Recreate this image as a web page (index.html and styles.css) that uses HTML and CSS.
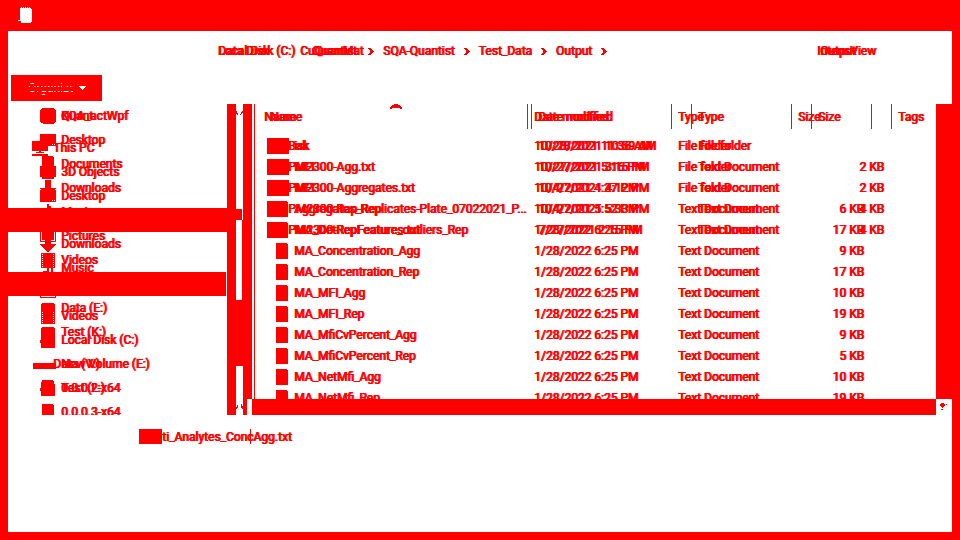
FILE: index.html
```html
<!DOCTYPE html>
<html lang="en">
<head>
<meta charset="utf-8">
<title>Output</title>
<link rel="stylesheet" href="styles.css">
</head>
<body>
<svg class="defs" aria-hidden="true">
  <symbol id="star" viewBox="0 0 16 16"><path d="M2 0h12v1h1v1h1v12h-1v1h-1v1H3v-1H1v-1H0V2h1V1h1z"/></symbol>
  <symbol id="desk" viewBox="0 0 16 16"><path fill-rule="evenodd" d="M0 2h16v12H0zM12 12h1v1h-1zM14 12h1v1h-1z"/></symbol>
  <symbol id="pc" viewBox="0 0 16 16"><path d="M0 1h16v10H0zM7 11h2v1H7zM4 12h8v1H4zM0 14h16v2H0z"/></symbol>
  <symbol id="doc" viewBox="0 0 16 16"><path d="M2 0h11v1h1v15H2z"/></symbol>
  <symbol id="cube" viewBox="0 0 16 16"><path d="M2 1h12v1h2v11h-2v2H2v-2H0V2h2z"/></symbol>
  <symbol id="down" viewBox="0 0 16 16"><path d="M5 0h6v8h5v1h-1v1h-1v1h-1v1h-1v1h-1v1h-1v1H9v1H7v-1H6v-1H5v-1H4v-1H3v-1H2v-1H1V9H0V8h5z"/></symbol>
  <symbol id="music" viewBox="0 0 16 16"><path d="M7 0h2v2h2v2h2v9h-2V5H9v10H3v-4h4z"/></symbol>
  <symbol id="pic" viewBox="0 0 16 16"><path fill-rule="evenodd" d="M0 0h16v14H0zM1 1v12h14V1z"/><path d="M2 2h12v10H2z"/></symbol>
  <symbol id="film" viewBox="0 0 16 16"><path fill-rule="evenodd" d="M1 1h14v15H1zM2 2v1h1V2zM2 4v1h1V4zM2 6v1h1V6zM2 8v1h1V8zM2 10v1h1v-1zM2 12v1h1v-1zM2 14v1h1v-1zM13 2v1h1V2zM13 4v1h1V4zM13 6v1h1V6zM13 8v1h1V8zM13 10v1h1v-1zM13 12v1h1v-1zM13 14v1h1v-1z"/></symbol>
  <symbol id="drive" viewBox="0 0 16 16"><path d="M2 3h12v1h1v8H1V4h1z"/></symbol>
  <symbol id="disk" viewBox="0 0 16 16"><path d="M1 2h13v2h1v12H1v-5H0V8h1z"/></symbol>
  <symbol id="wedge" viewBox="0 0 22 16"><path d="M2 7h20v8H1V8h1z"/></symbol>
  <symbol id="folder" viewBox="0 0 16 16"><path d="M0 0h16v16H0z"/></symbol>
  <symbol id="txt" viewBox="0 0 16 16"><path d="M3 0h11v1h1v15H3z"/></symbol>
  <symbol id="chev" viewBox="0 0 6 7"><path d="M0 0h3v1h1v1h1v1h1v1H5v1H4v1H3v1H0V6h1V5h1V2H1V1H0z"/></symbol>
</svg>

<div class="window">
  <header class="titlebar">
    <svg class="app-icon" viewBox="0 0 16 17" aria-hidden="true"><path d="M4 0h1v1h1V0h1v1h1V0h1v1h1V0h1v1h1V0h1v1h1v1h1v13h-1v1H4v-2H1v-1h2V1h1z"/></svg>
  </header>

  <nav class="address">
    <div class="layer crumbs crumbs-front">
      <a href="#" class="root-crumb">Local Disk (C:)</a>
      <a href="#" class="custom">CuQuanMat</a>
      <svg class="chev"><use href="#chev"/></svg>
      <a href="#">SQA-Quantist</a>
      <svg class="chev"><use href="#chev"/></svg>
      <a href="#">Test_Data</a>
      <svg class="chev"><use href="#chev"/></svg>
      <a href="#">Output</a>
      <svg class="chev"><use href="#chev"/></svg>
    </div>
    <div class="layer crumbs crumbs-back">
      <a href="#" class="root-crumb">Data Disk</a>
      <a href="#" class="quant">Quantist</a>
    </div>
    <div class="layer view view-front">Output</div>
    <div class="layer view">IntensView</div>
  </nav>

  <div class="toolbar">
    <button class="organize" type="button"><span>Organize</span><svg viewBox="0 0 7 4" aria-hidden="true"><path d="M0 0h7v1H6v1H5v1H4v1H3V3H2V2H1V1H0z"/></svg></button>
  </div>

  <main class="panes">
    <aside class="sidebar">
      <ul class="layer tree">
        <li><svg><use href="#star"/></svg>KQA_actWpf</li>
        <li><svg><use href="#desk"/></svg>Desktop</li>
        <li><svg><use href="#doc"/></svg>Documents</li>
        <li><svg><use href="#down"/></svg>Downloads</li>
        <li><svg><use href="#music"/></svg>Music</li>
        <li><svg><use href="#pic"/></svg>Pictures</li>
        <li><svg><use href="#film"/></svg>Videos</li>
        <li class="selected"><i class="dash"></i></li>
        <li><svg><use href="#drive"/></svg>Data (E:)</li>
        <li><svg><use href="#drive"/></svg>Test (K:)</li>
        <li class="root spaced"><svg><use href="#wedge"/></svg>Data (V:)</li>
        <li><svg><use href="#doc"/></svg>0.0.0.2-x64</li>
        <li><svg><use href="#doc"/></svg>0.0.0.3-x64</li>
      </ul>
      <ul class="layer tree">
        <li><svg><use href="#star"/></svg>Quant</li>
        <li class="root spaced"><svg><use href="#pc"/></svg>This PC</li>
        <li><svg><use href="#cube"/></svg>3D Objects</li>
        <li><svg><use href="#desk"/></svg>Desktop</li>
        <li class="selected full"></li>
        <li><svg><use href="#down"/></svg>Downloads</li>
        <li><svg><use href="#music"/></svg>Music</li>
        <li><svg><use href="#pic"/></svg>Pictures</li>
        <li><svg><use href="#film"/></svg>Videos</li>
        <li><svg><use href="#disk"/></svg>Local Disk (C:)</li>
        <li><svg><use href="#wedge"/></svg>New Volume (E:)</li>
        <li><svg><use href="#disk"/></svg>Test (L:)</li>
      </ul>
    </aside>

    <div class="splitter">
      <div class="bar"></div>
      <div class="channel">
        <div class="track-top"><svg class="tick" viewBox="0 0 7 5"><path d="M0 0h1v2h1v2H1V3H0zM6 0h1v2H6v1H5v1H4V3h1V1h1z"/></svg></div>
        <div class="thumb-edge"></div>
        <div class="track-mid"></div>
        <div class="thumb"></div>
        <div class="track-end"><svg class="tick" viewBox="0 0 7 5"><path d="M0 3h1V1h1v3H1v1H0zM5 0h1v2h1v3H6V4H5z"/></svg></div>
      </div>
      <div class="bar notched"></div>
    </div>

    <section class="files">
      <div class="list">
        <svg class="sort" viewBox="0 0 12 5" aria-hidden="true"><path d="M4 0h4v1h2v1h1v1h1v2h-2V4H2v1H0V3h1V2h1V1h2z"/></svg>
        <table class="layer table-a">
          <colgroup><col class="name"><col class="date"><col class="type"><col class="size"><col></colgroup>
          <thead><tr><th>Name</th><th>Date modified</th><th>Type</th><th>Size</th><th></th></tr></thead>
          <tbody>
            <tr><td><svg><use href="#folder"/></svg>isk</td><td>10/28/2021 11:36 AM</td><td>File folder</td><td></td><td></td></tr>
            <tr><td><svg><use href="#folder"/></svg>MFI</td><td>10/27/2021 5:16 PM</td><td>File folder</td><td></td><td></td></tr>
            <tr><td><svg><use href="#folder"/></svg>MFI</td><td>10/4/2021 4:27 PM</td><td>File folder</td><td></td><td></td></tr>
            <tr><td><svg><use href="#txt"/></svg>Aggregates_Rep</td><td>10/4/2021 5:52 PM</td><td>Text Document</td><td>6 KB</td><td></td></tr>
            <tr><td><svg><use href="#txt"/></svg>MA_DetRepFeature_outliers_Rep</td><td>1/28/2022 6:25 PM</td><td>Text Document</td><td>17 KB</td><td></td></tr>
            <tr><td><svg><use href="#txt"/></svg>MA_Concentration_Agg</td><td>1/28/2022 6:25 PM</td><td>Text Document</td><td>9 KB</td><td></td></tr>
            <tr><td><svg><use href="#txt"/></svg>MA_Concentration_Rep</td><td>1/28/2022 6:25 PM</td><td>Text Document</td><td>17 KB</td><td></td></tr>
            <tr><td><svg><use href="#txt"/></svg>MA_MFI_Agg</td><td>1/28/2022 6:25 PM</td><td>Text Document</td><td>10 KB</td><td></td></tr>
            <tr><td><svg><use href="#txt"/></svg>MA_MFI_Rep</td><td>1/28/2022 6:25 PM</td><td>Text Document</td><td>19 KB</td><td></td></tr>
            <tr><td><svg><use href="#txt"/></svg>MA_MfiCvPercent_Agg</td><td>1/28/2022 6:25 PM</td><td>Text Document</td><td>9 KB</td><td></td></tr>
            <tr><td><svg><use href="#txt"/></svg>MA_MfiCvPercent_Rep</td><td>1/28/2022 6:25 PM</td><td>Text Document</td><td>5 KB</td><td></td></tr>
            <tr><td><svg><use href="#txt"/></svg>MA_NetMfi_Agg</td><td>1/28/2022 6:25 PM</td><td>Text Document</td><td>10 KB</td><td></td></tr>
            <tr><td><svg><use href="#txt"/></svg>MA_NetMfi_Rep</td><td>1/28/2022 6:25 PM</td><td>Text Document</td><td>19 KB</td><td></td></tr>
          </tbody>
        </table>
        <table class="layer table-b">
          <colgroup><col class="name"><col class="date"><col class="type"><col class="size"><col></colgroup>
          <thead><tr><th>Name</th><th>Date modified</th><th>Type</th><th>Size</th><th>Tags</th></tr></thead>
          <tbody>
            <tr><td><svg><use href="#folder"/></svg>Bak</td><td>10/28/2021 10:59 AM</td><td>File folder</td><td></td><td></td></tr>
            <tr><td><svg><use href="#folder"/></svg>PM2300-Agg.txt</td><td>10/27/2021 3:15 PM</td><td>Text Document</td><td>2 KB</td><td></td></tr>
            <tr><td><svg><use href="#folder"/></svg>PM2300-Aggregates.txt</td><td>10/27/2021 4:12 PM</td><td>Text Document</td><td>2 KB</td><td></td></tr>
            <tr><td><svg><use href="#folder"/></svg>PM2300-Rap-Replicates-Plate_07022021_P...</td><td>10/27/2021 5:33 PM</td><td>Text Document</td><td>4 KB</td><td></td></tr>
            <tr><td><svg><use href="#folder"/></svg>PM2300-RepFeatures.txt</td><td>7/27/2021 2:15 PM</td><td>Text Document</td><td>4 KB</td><td></td></tr>
          </tbody>
        </table>
      </div>
      <div class="vscroll"></div>
      <div class="hscroll"></div>
      <div class="corner"><svg viewBox="0 0 7 7"><path d="M1 0h3v1h1v2H4v1H1V3H0V1h1zM6 1h1v1H6zM2 4h1v1H2zM1 6h2v1H1z"/></svg></div>
    </section>
  </main>

  <footer class="filename">
    <span class="mark"></span>
    <input type="text" aria-label="File name" value="ti_Analytes_ConcAgg.txt">
    <span class="caret"></span>
  </footer>
</div>
</body>
</html>
```
FILE: styles.css
```css
:root {
  --ink: #ff0000;
  --paper: #ffffff;
}

* {
  box-sizing: border-box;
}

body {
  margin: 0;
  background: var(--paper);
  color: var(--ink);
  font: 12px/16px Roboto, "Liberation Sans", sans-serif;
  text-shadow: 1px 0 0 var(--ink), 0 0 0 var(--ink);
}

svg {
  display: block;
  flex: none;
  fill: var(--ink);
  shape-rendering: crispEdges;
}

a {
  color: inherit;
  text-decoration: none;
}

.defs {
  display: none;
}

.window {
  display: grid;
  grid-template-rows: 31px 44px 29px minmax(0, 1fr) 117px;
  grid-template-columns: minmax(0, 1fr);
  height: 100vh;
  border: solid var(--ink);
  border-width: 0 8px 8px;
  overflow: hidden;
}

.layer {
  grid-area: 1 / 1;
}

/* Title and address */
.titlebar {
  background: var(--ink);
  padding: 7px 9px;
}

.app-icon {
  width: 16px;
  height: 17px;
  fill: var(--paper);
}

.address {
  display: grid;
  align-items: start;
  padding-top: 12px;
  white-space: nowrap;
}

.crumbs {
  display: flex;
  align-items: center;
  gap: 9px;
  padding-left: 210px;
}

.root-crumb {
  width: 73px;
}

.custom {
  width: 59px;
}

.quant {
  margin-left: 12px;
}

.chev {
  width: 6px;
  height: 7px;
}

.view {
  justify-self: end;
  padding-right: 76px;
}

.view-front {
  padding-right: 96px;
}

/* Toolbar */
.toolbar {
  padding-left: 3px;
}

.organize {
  display: flex;
  align-items: center;
  gap: 6px;
  width: 91px;
  height: 26px;
  border: 0;
  padding: 0 16px 0 17px;
  background: var(--ink);
  font: inherit;
  text-shadow: none;
}

.organize span {
  width: 45px;
  color: transparent;
  background: linear-gradient(transparent 3px, #fff 3px 4px, transparent 4px 6px, #fff 6px 7px, transparent 7px 11px, #fff 11px 12px, transparent 12px 14px, #fff 14px 15px, transparent 15px);
  background-clip: text;
  -webkit-background-clip: text;
}

.organize svg {
  width: 7px;
  height: 4px;
  fill: var(--paper);
}

/* Panes */
.panes {
  display: grid;
  grid-template-columns: 219px 25px minmax(0, 1fr);
  grid-template-rows: minmax(0, 1fr);
}

.sidebar {
  display: grid;
  align-items: start;
  overflow: hidden;
}

.tree {
  list-style: none;
  margin: 0;
  padding: 0 1px 0 0;
}

.tree li {
  display: flex;
  align-items: center;
  gap: 5px;
  height: 24px;
  padding-left: 32px;
  white-space: nowrap;
}

.tree svg {
  width: 16px;
  height: 16px;
  overflow: visible;
}

.tree .root {
  padding-left: 24px;
}

.tree .spaced {
  margin-top: 8px;
}

.tree .selected {
  background: var(--ink);
}

.tree .full {
  margin-right: -1px;
}

.dash {
  width: 2px;
  height: 1px;
  margin: 6px 0 0 23px;
  background: var(--paper);
}

.splitter {
  display: grid;
  grid-template-columns: 9px 7px 9px;
}

.bar,
.thumb {
  background: var(--ink);
}

.notched {
  clip-path: polygon(0 0, 100% 0, 100% calc(100% - 16px), 4px calc(100% - 16px), 4px 100%, 0 100%);
}

.channel {
  display: grid;
  grid-template-rows: 105px 11px 80px 66px minmax(0, 1fr);
}

.tick {
  width: 7px;
  height: 5px;
}

.track-top {
  padding-top: 7px;
}

.thumb-edge {
  background: var(--ink);
  margin-right: 1px;
}

.track-mid {
  border-right: 1px solid var(--ink);
}

.track-end {
  display: flex;
  align-items: end;
  padding-bottom: 6px;
}

/* File list */
.files {
  display: grid;
  grid-template-columns: minmax(0, 1fr) 16px;
  grid-template-rows: minmax(0, 1fr) 16px;
}

.list {
  position: relative;
  display: grid;
  align-items: start;
  margin-left: 2px;
  border-left: 1px solid var(--ink);
  overflow: hidden;
}

.sort {
  position: absolute;
  top: 0;
  left: 135px;
  width: 12px;
  height: 5px;
}

table {
  width: 100%;
  table-layout: fixed;
  border-collapse: separate;
  border-spacing: 0;
}

.table-a .name { width: 273px; }
.table-a .date { width: 144px; }
.table-b .name { width: 277px; }
.table-b .date { width: 160px; }
.type { width: 120px; }
.size { width: 80px; }

th,
td {
  padding: 0 0 0 6px;
  font-weight: 400;
  text-align: left;
  white-space: nowrap;
}

th {
  height: 25px;
  border-right: 1px solid var(--ink);
}

th:last-child {
  border-right: 0;
}

thead::after {
  content: "";
  display: block;
  height: 6px;
}

th:first-child {
  padding-left: 9px;
}

.table-b th:first-child {
  padding-left: 15px;
}

td {
  height: 21px;
}

td:first-child {
  display: flex;
  align-items: center;
  gap: 5px;
  padding-left: 18px;
}

.table-b td:first-child {
  padding-left: 12px;
}

td:nth-child(4) {
  padding-right: 8px;
  text-align: right;
}

td svg {
  width: 16px;
  height: 16px;
}

.vscroll,
.hscroll {
  background: var(--ink);
}

.corner svg {
  width: 7px;
  height: 7px;
  margin: 4px;
}

/* File name field */
.filename {
  display: flex;
  align-items: start;
  padding: 14px 0 0 131px;
}

.mark {
  width: 23px;
  height: 15px;
  background: var(--ink);
}

.filename input {
  width: 140px;
  height: 16px;
  border: 0;
  padding: 0;
  background: none;
  color: inherit;
  font: inherit;
  text-shadow: inherit;
}

.caret {
  width: 1px;
  height: 15px;
  margin-left: -52px;
  background: var(--ink);
}
```
